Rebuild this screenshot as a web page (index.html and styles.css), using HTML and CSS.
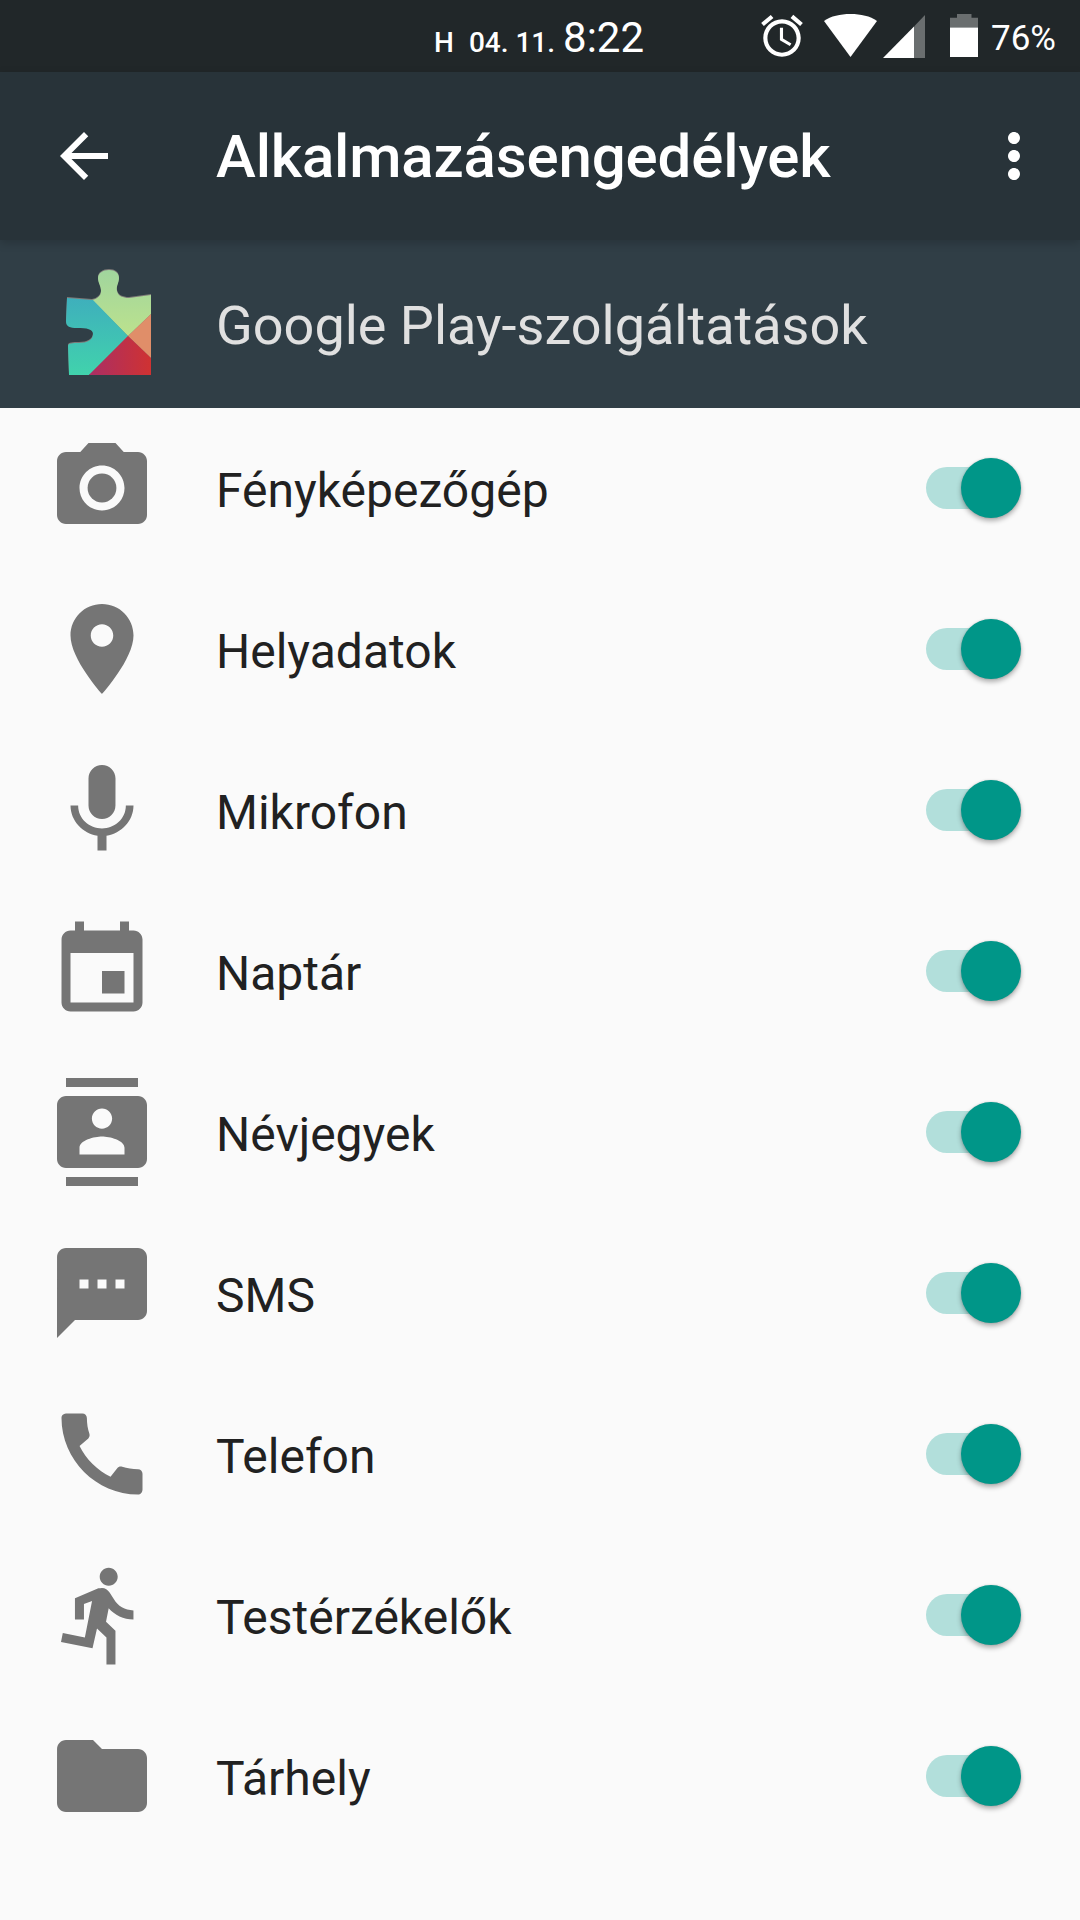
FILE: index.html
```html
<!DOCTYPE html>
<html lang="hu">
<head>
  <meta charset="UTF-8">
  <meta name="viewport" content="width=device-width, initial-scale=1.0">
  <title>Alkalmazásengedélyek</title>
  <link rel="stylesheet" href="styles.css">
</head>
<body>
  <div class="status-bar">
    <div class="status-clock">
      <span class="status-day">H</span>
      <span class="status-date">04. 11.</span>
      <span class="status-time">8:22</span>
    </div>
    <div class="status-icons">
      <svg class="status-alarm" viewBox="0 0 24 24"><path d="M22 5.72l-4.6-3.86-1.29 1.53 4.6 3.86L22 5.72zM7.88 3.39L6.6 1.86 2 5.71l1.29 1.53 4.59-3.85zM12.5 8H11v6l4.75 2.85.75-1.23-4-2.37V8zM12 4c-4.97 0-9 4.03-9 9s4.03 9 9 9 9-4.03 9-9-4.03-9-9-9zm0 16c-3.87 0-7-3.13-7-7s3.13-7 7-7 7 3.13 7 7-3.13 7-7 7z"/></svg>
      <svg class="status-wifi" viewBox="0 0 53 43"><path d="M0 7C7 2 16 0 26.5 0S46 2 53 7L26.5 43z"/></svg>
      <svg class="status-signal" viewBox="0 0 42 43"><path class="icon-dim" d="M42 0v43H31V11.5z"/><path d="M31 11.5V43H0z"/></svg>
      <svg class="status-battery" viewBox="0 0 28.4 43.3"><path class="icon-dim" d="M7 0h14.5v3.7h6.9v9.8H0V3.7h7z"/><path d="M0 13.5h28.4v29.8H0z"/></svg>
      <span class="status-level">76%</span>
    </div>
  </div>

  <header class="toolbar">
    <svg class="toolbar-icon" viewBox="0 0 24 24"><path d="M20 11H7.83l5.59-5.59L12 4l-8 8 8 8 1.41-1.41L7.83 13H20v-2z"/></svg>
    <h1 class="toolbar-title">Alkalmazásengedélyek</h1>
    <svg class="toolbar-icon" viewBox="0 0 24 24"><path d="M12 8c1.1 0 2-.9 2-2s-.9-2-2-2-2 .9-2 2 .9 2 2 2zm0 2c-1.1 0-2 .9-2 2s.9 2 2 2 2-.9 2-2-.9-2-2-2zm0 6c-1.1 0-2 .9-2 2s.9 2 2 2 2-.9 2-2-.9-2-2-2z"/></svg>
  </header>

  <div class="app-header">
    <svg class="app-icon" viewBox="0 0 86 107">
      <defs>
        <clipPath id="puzzle">
          <path id="puzzle-shape" d="M2 29L27 31C32 30 36 27 36 22C36 17 33 14 33 9C33 4 38 1 44 1C50 1 54 4 54 9C54 14 51 17 52 22C53 27 58 29 64 29L86 26V106H4L3 77C3 74 8 74 14 74C22 74 28 71 28 65C28 60 22 59 12 59C5 59 1 58 1 52z"/>
        </clipPath>
        <linearGradient id="teal" x1="0" y1="0" x2="0" y2="1">
          <stop offset="0" stop-color="#3eabbe"/>
          <stop offset="1" stop-color="#41d3ac"/>
        </linearGradient>
        <linearGradient id="green" x1="0" y1="0" x2="0" y2="1">
          <stop offset="0" stop-color="#a0d59e"/>
          <stop offset="1" stop-color="#bce28d"/>
        </linearGradient>
        <linearGradient id="red" x1="0" y1="1" x2="1" y2="1">
          <stop offset="0" stop-color="#a92e66"/>
          <stop offset="1" stop-color="#cf3232"/>
        </linearGradient>
      </defs>
      <!-- grey rim along the upper edges of the piece -->
      <use href="#puzzle-shape" fill="#7d7a78" transform="translate(0 -1)"/>
      <g clip-path="url(#puzzle)">
        <path fill="url(#green)" d="M0 0H86V45L63 67L25 29z"/>
        <path fill="url(#teal)" d="M0 20L27 30L63 67L23 107H0z"/>
        <path fill="#e08e69" d="M86 45V89L63 67z"/>
        <path fill="url(#red)" d="M63 67L86 89V107H23z"/>
      </g>
    </svg>
    <span class="app-name">Google Play-szolgáltatások</span>
  </div>

  <ul class="perm-list">
    <li class="perm-row">
      <svg class="perm-icon" viewBox="0 0 24 24"><circle cx="12" cy="12" r="3.2"/><path d="M9 2L7.17 4H4c-1.1 0-2 .9-2 2v12c0 1.1.9 2 2 2h16c1.1 0 2-.9 2-2V6c0-1.1-.9-2-2-2h-3.17L15 2H9zm3 15c-2.76 0-5-2.24-5-5s2.24-5 5-5 5 2.24 5 5-2.24 5-5 5z"/></svg>
      <span class="perm-label">Fényképezőgép</span>
      <div class="switch"><div class="switch-track"></div><div class="switch-thumb"></div></div>
    </li>
    <li class="perm-row">
      <svg class="perm-icon" viewBox="0 0 24 24"><path d="M12 2C8.13 2 5 5.13 5 9c0 5.25 7 13 7 13s7-7.75 7-13c0-3.87-3.13-7-7-7zm0 9.5c-1.38 0-2.5-1.12-2.5-2.5s1.12-2.5 2.5-2.5 2.5 1.12 2.5 2.5-1.12 2.5-2.5 2.5z"/></svg>
      <span class="perm-label">Helyadatok</span>
      <div class="switch"><div class="switch-track"></div><div class="switch-thumb"></div></div>
    </li>
    <li class="perm-row">
      <svg class="perm-icon" viewBox="0 0 24 24"><path d="M12 14c1.66 0 2.99-1.34 2.99-3L15 5c0-1.66-1.34-3-3-3S9 3.34 9 5v6c0 1.66 1.34 3 3 3zm5.3-3c0 3-2.54 5.1-5.3 5.1S6.7 14 6.7 11H5c0 3.41 2.72 6.23 6 6.72V21h2v-3.28c3.28-.48 6-3.3 6-6.72h-1.7z"/></svg>
      <span class="perm-label">Mikrofon</span>
      <div class="switch"><div class="switch-track"></div><div class="switch-thumb"></div></div>
    </li>
    <li class="perm-row">
      <svg class="perm-icon" viewBox="0 0 24 24"><path d="M17 12h-5v5h5v-5zM16 1v2H8V1H6v2H5c-1.11 0-1.99.9-1.99 2L3 19c0 1.1.89 2 2 2h14c1.1 0 2-.9 2-2V5c0-1.1-.9-2-2-2h-1V1h-2zm3 18H5V8h14v11z"/></svg>
      <span class="perm-label">Naptár</span>
      <div class="switch"><div class="switch-track"></div><div class="switch-thumb"></div></div>
    </li>
    <li class="perm-row">
      <svg class="perm-icon" viewBox="0 0 24 24"><path d="M20 0H4v2h16V0zM4 24h16v-2H4v2zM20 4H4c-1.1 0-2 .9-2 2v12c0 1.1.9 2 2 2h16c1.1 0 2-.9 2-2V6c0-1.1-.9-2-2-2zm-8 2.75c1.24 0 2.25 1.01 2.25 2.25s-1.01 2.25-2.25 2.25S9.75 10.24 9.75 9 10.76 6.75 12 6.75zM17 17H7v-1.5c0-1.67 3.33-2.5 5-2.5s5 .83 5 2.5V17z"/></svg>
      <span class="perm-label">Névjegyek</span>
      <div class="switch"><div class="switch-track"></div><div class="switch-thumb"></div></div>
    </li>
    <li class="perm-row">
      <svg class="perm-icon" viewBox="0 0 24 24"><path d="M20 2H4c-1.1 0-1.99.9-1.99 2L2 22l4-4h14c1.1 0 2-.9 2-2V4c0-1.1-.9-2-2-2zM9 11H7V9h2v2zm4 0h-2V9h2v2zm4 0h-2V9h2v2z"/></svg>
      <span class="perm-label">SMS</span>
      <div class="switch"><div class="switch-track"></div><div class="switch-thumb"></div></div>
    </li>
    <li class="perm-row">
      <svg class="perm-icon" viewBox="0 0 24 24"><path d="M20.01 15.38c-1.23 0-2.42-.2-3.53-.56-.35-.12-.74-.03-1.01.24l-1.57 1.97c-2.83-1.35-5.48-3.9-6.89-6.83l1.95-1.66c.27-.28.35-.67.24-1.02-.37-1.11-.56-2.3-.56-3.53 0-.54-.45-.99-.99-.99H4.19C3.65 3 3 3.24 3 3.99 3 13.28 10.73 21 20.01 21c.71 0 .99-.63.99-1.18v-3.45c0-.54-.45-.99-.99-.99z"/></svg>
      <span class="perm-label">Telefon</span>
      <div class="switch"><div class="switch-track"></div><div class="switch-thumb"></div></div>
    </li>
    <li class="perm-row">
      <svg class="perm-icon" viewBox="0 0 24 24"><path d="M13.49 5.48c1.1 0 2-.9 2-2s-.9-2-2-2-2 .9-2 2 .9 2 2 2zm-3.6 13.9l1-4.4 2.1 2v6h2v-7.5l-2.1-2 .6-3c1.3 1.5 3.3 2.5 5.5 2.5v-2c-1.9 0-3.5-1-4.3-2.4l-1-1.6c-.4-.6-1-1-1.7-1-.3 0-.5.1-.8.1l-5.2 2.2v4.7h2v-3.4l1.8-.7-1.6 8.1-4.9-1-.4 2 7 1.4z"/></svg>
      <span class="perm-label">Testérzékelők</span>
      <div class="switch"><div class="switch-track"></div><div class="switch-thumb"></div></div>
    </li>
    <li class="perm-row">
      <svg class="perm-icon" viewBox="0 0 24 24"><path d="M10 4H4c-1.1 0-1.99.9-1.99 2L2 18c0 1.1.9 2 2 2h16c1.1 0 2-.9 2-2V8c0-1.1-.9-2-2-2h-8l-2-2z"/></svg>
      <span class="perm-label">Tárhely</span>
      <div class="switch"><div class="switch-track"></div><div class="switch-thumb"></div></div>
    </li>
  </ul>
</body>
</html>
```

FILE: styles.css
```css
* {
  box-sizing: border-box;
}

body {
  margin: 0;
  width: 1080px;
  height: 1920px;
  overflow: hidden;
  background-color: #fafafa;
  font-family: Roboto, "Noto Sans", sans-serif;
}

.status-bar {
  display: flex;
  align-items: center;
  justify-content: space-between;
  height: 72px;
  padding: 0 24px 0 434px;
  background-color: #212729;
  color: #ffffff;
  fill: #ffffff;
}

.status-clock {
  display: flex;
  align-items: baseline;
  margin-top: 3px;
}

.status-day {
  font-size: 28px;
  font-weight: 500;
}

.status-date {
  font-size: 28px;
  font-weight: 500;
  margin-left: 15px;
}

.status-time {
  font-size: 42px;
  margin-left: 8px;
}

.status-icons {
  display: flex;
  align-items: center;
}

.status-alarm {
  width: 50px;
  height: 50px;
}

.status-wifi {
  width: 53px;
  height: 43px;
  margin-left: 17px;
  margin-top: -1px;
}

.status-signal {
  width: 42px;
  height: 43px;
  margin-left: 6px;
}

.status-battery {
  width: 28.4px;
  height: 43.3px;
  margin-left: 25px;
  margin-top: -1px;
}

.icon-dim {
  opacity: 0.33;
}

.status-level {
  font-size: 35px;
  margin-left: 13px;
  margin-top: 4px;
}

.toolbar {
  position: relative;
  z-index: 1;
  display: flex;
  align-items: center;
  height: 168px;
  padding: 0 30px 0 48px;
  background-color: #283339;
  box-shadow: 0 3px 9px rgba(0, 0, 0, 0.18);
  fill: #ffffff;
}

.toolbar-icon {
  width: 72px;
  height: 72px;
  flex-shrink: 0;
}

.toolbar-title {
  flex: 1;
  margin: 0 0 0 96px;
  font-size: 60px;
  font-weight: 500;
  letter-spacing: -0.15px;
  color: #ffffff;
}

.app-header {
  display: flex;
  align-items: center;
  height: 168px;
  padding-left: 65px;
  background-color: #303e46;
}

.app-icon {
  width: 86px;
  height: 107px;
  margin-right: 65px;
  margin-top: -4px;
  flex-shrink: 0;
}

.app-name {
  padding-top: 3px;
  font-size: 54px;
  color: #e0e0e0;
}

.perm-list {
  margin: -1px 0 0;
  padding: 0;
  list-style: none;
}

.perm-row {
  display: flex;
  align-items: center;
  height: 161px;
  padding: 0 59px 0 48px;
  color: #212121;
}

.perm-icon {
  width: 108px;
  height: 108px;
  margin-right: 60px;
  fill: #757575;
  flex-shrink: 0;
}

.perm-label {
  flex: 1;
  padding-top: 6px;
  font-size: 48px;
}

.switch {
  position: relative;
  width: 95px;
  height: 60px;
  margin-top: 1px;
}

.switch-track {
  position: absolute;
  left: 0;
  top: 9px;
  width: 83px;
  height: 42px;
  border-radius: 21px;
  background-color: #b2dfdb;
}

.switch-thumb {
  position: absolute;
  right: 0;
  top: 0;
  width: 60px;
  height: 60px;
  border-radius: 50%;
  background-color: #009688;
  box-shadow: 0 3px 5px rgba(0, 0, 0, 0.3), 0 0 2px rgba(0, 0, 0, 0.15);
}
```
